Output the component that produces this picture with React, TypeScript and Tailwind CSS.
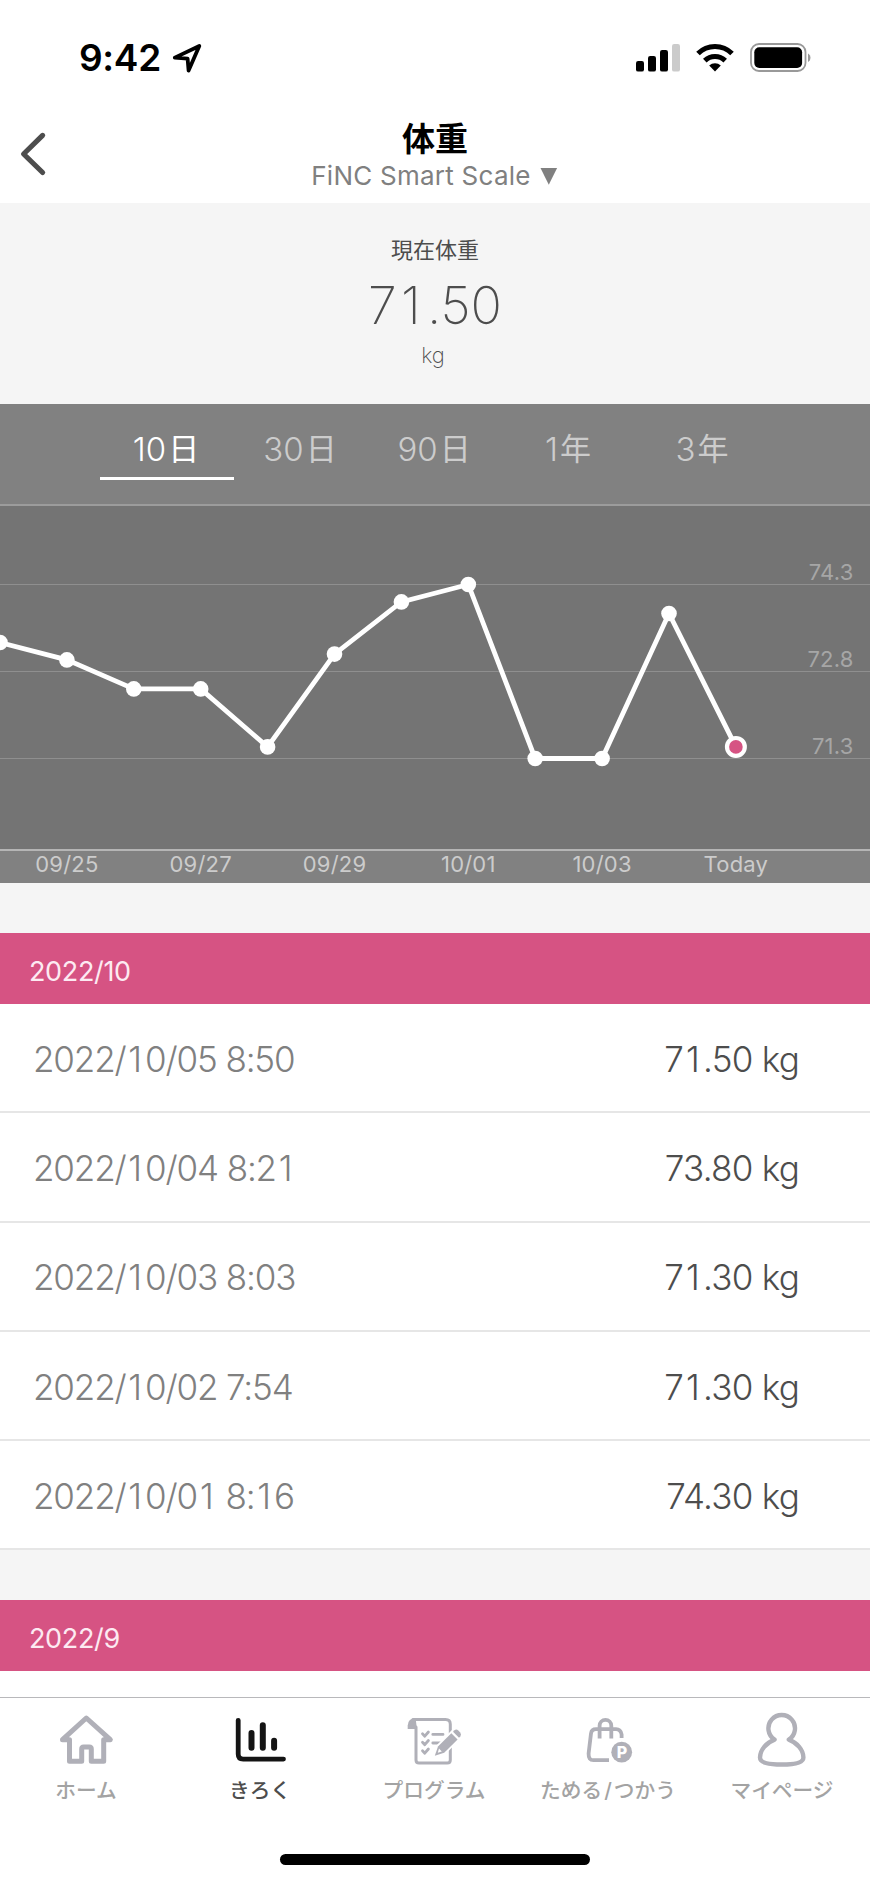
import type { ReactNode } from 'react'

type Entry = { date: string; value: string }

const RANGES = [
  { n: '10', unit: '日' },
  { n: '30', unit: '日' },
  { n: '90', unit: '日' },
  { n: '1', unit: '年' },
  { n: '3', unit: '年' },
]

const WEIGHTS = [73.3, 73.0, 72.5, 72.5, 71.5, 73.1, 74.0, 74.3, 71.3, 71.3, 73.8, 71.5]
const GRID = [74.3, 72.8, 71.3]
const DAYS = ['09/25', '09/27', '09/29', '10/01', '10/03', 'Today']

const ENTRIES: Entry[] = [
  { date: '2022/10/05 8:50', value: '71.50 kg' },
  { date: '2022/10/04 8:21', value: '73.80 kg' },
  { date: '2022/10/03 8:03', value: '71.30 kg' },
  { date: '2022/10/02 7:54', value: '71.30 kg' },
  { date: '2022/10/01 8:16', value: '74.30 kg' },
]

/** Pads the narrow "1" to the width of the other digits so the columns line up. */
function Num({ children }: { children: string }) {
  return children.split(/(1)/).map((part, i) =>
    part === '1' ? (
      <span key={i} className="pr-[0.12em] pl-[0.08em]">
        1
      </span>
    ) : (
      part
    ),
  )
}

function StatusBar() {
  return (
    <div className="flex h-[110px] items-start justify-between pt-[38px] pr-[58px] pl-[79px]">
      <div className="flex h-10 items-center">
        <span className="w-[93px] text-[37px] leading-10 font-semibold tracking-[-0.3px]">9:42</span>
        <svg width="31" height="31" viewBox="0 0 31 31" fill="none">
          <path
            d="M2.8 14.6 27.3 3 16.6 27.6 15.6 15.7Z"
            stroke="#000"
            strokeWidth="3.8"
            strokeLinejoin="round"
          />
        </svg>
      </div>
      <svg width="176" height="40" viewBox="636 38 176 40">
        <rect x="636" y="61" width="8" height="10.6" rx="2.2" />
        <rect x="648" y="56" width="8" height="15.6" rx="2.2" />
        <rect x="660" y="50" width="8" height="21.6" rx="2.2" />
        <rect x="672" y="44" width="8" height="27.6" rx="2.2" fill="#cbcbcb" />
        <g fill="none" stroke="#000" strokeWidth="5">
          <path d="M698 53.6a24 24 0 0 1 34 0" />
          <path d="M704.8 60.6a14.5 14.5 0 0 1 20.4 0" />
        </g>
        <path d="M715 71.6 709.2 65.4a8.6 8.6 0 0 1 11.6 0Z" />
        <rect x="751" y="44" width="54.5" height="27" rx="8" fill="none" stroke="#999" strokeWidth="1.8" />
        <rect x="754.3" y="47.3" width="47.8" height="20.6" rx="5" />
        <path d="M808 53.4a5 5 0 0 1 0 8.6Z" fill="#999" />
      </svg>
    </div>
  )
}

function Header() {
  return (
    <header className="relative flex h-[93px] flex-col items-center pt-[9px]">
      <svg className="absolute top-[20px] left-[16px]" width="34" height="48" viewBox="16 130 34 48" fill="none">
        <path
          d="M42.6 135.4 23.6 154l19 18.5"
          stroke="#4d4d4d"
          strokeWidth="5.2"
          strokeLinecap="round"
          strokeLinejoin="round"
        />
      </svg>
      <h1 className="text-[33px] leading-10 font-bold">体重</h1>
      <div className="flex items-center pt-[2px] pr-[1px] text-[#808080]">
        <span className="text-[26px] leading-[30px] tracking-[0.25px]">FiNC Smart Scale</span>
        <svg className="ml-[9px]" width="18" height="18" viewBox="0 0 18 18">
          <path d="M.5 1h16.6L8.8 17.8Z" fill="#808080" />
        </svg>
      </div>
    </header>
  )
}

function Current() {
  return (
    <section className="flex h-[201px] flex-col items-center bg-[#f5f5f5] text-[#4d4d4d]">
      <p className="pt-[32px] text-[22px] leading-[30px]">現在体重</p>
      <p className="pt-[11px] text-[52px] leading-[60px] font-extralight">
        <Num>71.50</Num>
      </p>
      <p className="pt-[4px] pr-[4px] text-[22px] leading-[30px] font-extralight">kg</p>
    </section>
  )
}

function RangeTabs() {
  return (
    <nav className="flex h-[102px] justify-center border-b-2 border-[#9c9c9c] bg-[#818181]">
      {RANGES.map(({ n, unit }, i) => (
        <div
          key={n}
          className={`flex h-[76px] w-[134px] items-center justify-center gap-[2px] border-b-3 pt-[16px] pr-[2px] leading-10 ${
            i === 0 ? 'border-white text-white' : 'border-transparent text-[#cccccc]'
          }`}
        >
          <span className="text-[33px] font-light">{n}</span>
          <span className="text-[31px] font-normal">{unit}</span>
        </div>
      ))}
    </nav>
  )
}

const STEP = 66.9
const px = (i: number) => i * STEP
const py = (kg: number) => 78.5 + (74.3 - kg) * 58

function Chart() {
  const last = WEIGHTS.length - 1
  return (
    <section>
      <svg className="block bg-[#747474]" width="870" height="343" viewBox="0 0 870 343">
        {GRID.map((g) => (
          <g key={g}>
            <line x1="0" x2="870" y1={py(g)} y2={py(g)} stroke="#8f8f8f" strokeWidth="1.2" />
            <text x="853.5" y={py(g) - 5} textAnchor="end" fontSize="22" letterSpacing="0.2" fill="#a6a6a6">
              {g.toFixed(1)}
            </text>
          </g>
        ))}
        <polyline
          points={WEIGHTS.map((w, i) => `${px(i)},${py(w)}`).join(' ')}
          fill="none"
          stroke="#fff"
          strokeWidth="4.8"
        />
        {WEIGHTS.map((w, i) => (
          <circle key={i} cx={px(i)} cy={py(w)} r={i === last ? 11 : 7.8} fill="#fff" />
        ))}
        <circle cx={px(last)} cy={py(WEIGHTS[last])} r="6.8" fill="#d65383" />
      </svg>
      <div className="flex h-[34px] border-t-2 border-[#b5b5b5] bg-[#818181]">
        {DAYS.map((d) => (
          <span
            key={d}
            className="w-[133.8px] text-center text-[22px] leading-[26px] tracking-[0.2px] text-[#cccccc]"
          >
            {d}
          </span>
        ))}
      </div>
    </section>
  )
}

function MonthBar({ children }: { children: ReactNode }) {
  return (
    <h2 className="mt-[50px] flex h-[71px] items-center bg-[#d65383] pt-[7px] pl-[29px] text-[27px] tracking-[-0.35px] text-[#fdeaf2]">
      {children}
    </h2>
  )
}

function Row({ date, value }: Entry) {
  return (
    <li className="flex h-[109.3px] items-center justify-between border-b-2 border-[#e6e6e6] bg-white pt-[3px] pr-[71px] pl-[33px] text-[35px] font-light">
      <span className="tracking-[-1.15px] text-[#808080]">
        <Num>{date}</Num>
      </span>
      <span className="tracking-[-0.75px] text-[#4d4d4d]">
        <Num>{value}</Num>
      </span>
    </li>
  )
}

function Tab({ label, active = false, children }: { label: ReactNode; active?: boolean; children: ReactNode }) {
  return (
    <div className={`flex w-[174px] flex-col items-center ${active ? 'text-[#141414]' : 'text-[#b0b0b8]'}`}>
      <svg
        width="60"
        height="60"
        viewBox="0 0 60 60"
        fill="none"
        stroke="currentColor"
        strokeLinecap="round"
        strokeLinejoin="round"
      >
        {children}
      </svg>
      <span
        className={`mt-[6px] pr-[2px] text-[20.7px] leading-[30px] font-medium ${active ? 'text-[#4d4d4d]' : 'text-[#a3a3a3]'}`}
      >
        {label}
      </span>
    </div>
  )
}

function TabBar() {
  return (
    <footer className="mt-[25.5px] h-[186px] border-t border-[#b8b8bb] bg-white">
      <div className="flex pt-[12px]">
        <Tab label="ホーム">
          <path d="M29.3 8 53.3 29.7H46.7V51.2H34.3V39Q34.3 37 32.3 37H26.7Q24.7 37 24.7 39V51.2H12.5V29.7H5.5Z" strokeWidth="5" />
        </Tab>
        <Tab label="きろく" active>
          <path d="M7.2 10.3V44Q7.2 49.1 12.2 49.1H52.5" strokeWidth="4.8" />
          <path d="M20.5 22.9V37.7M31.8 15.2V37.7M43.1 30.8V37.7" strokeWidth="6" />
        </Tab>
        <Tab label="プログラム">
          <path d="M8 9.4H40.5Q45.3 9.4 45.3 14.2V50Q45.3 53 42.3 53H14Q11 53 11 50V17" strokeWidth="3" />
          <path d="M2.7 19V15.5Q3.2 8 10.5 8L12 19Z" fill="currentColor" stroke="none" />
          <g strokeWidth="2.8">
            <path d="m17.5 23.8 2.3 2.4 3.6-4.2M17.5 32.3l2.3 2.4 3.6-4.2M17.5 40.8l2.3 2.4 3.6-4.2" />
            <path d="M27.8 24.4H38M27.8 33H35" />
          </g>
          <path d="M30.5 45.2 33.4 36.5 49.3 20.8Q51.3 18.8 53.3 20.8L55 22.5Q57 24.5 55 26.5L39.2 42.2Z" fill="#fff" stroke="#fff" strokeWidth="4.4" />
          <path d="M29.8 45.8 33 36.5 46.3 23.2 52.6 29.4 39.2 42.7Z" fill="currentColor" stroke="none" />
          <path d="M48 21.7 49.5 20.2Q51.5 18.9 53.3 20.5L55.2 22.4Q56.8 24.3 55.3 26.4L54 27.8Z" fill="currentColor" stroke="none" />
          <path d="M32.8 42.7 34 38.6 36.8 41.4Z" fill="#fff" stroke="none" />
        </Tab>
        <Tab
          label={
            <>
              ためる<span className="px-[2px]">/</span>つかう
            </>
          }
        >
          <path d="M42.6 28V24.5Q41.6 19.2 37 19.2H17Q12.6 19.2 12 23.5L9.6 43.6Q9.4 50.2 14.4 50.2H30" strokeWidth="3.8" strokeLinecap="butt" />
          <path d="M20.6 28.4V15.8A5.8 5.8 0 0 1 32.3 15.8V28.4" strokeWidth="3.8" strokeLinecap="butt" />
          <circle cx="42.7" cy="42.2" r="10.4" fill="currentColor" stroke="none" />
          <text x="42.9" y="48" textAnchor="middle" fontSize="16" fontWeight="800" fill="#fff" stroke="none">
            P
          </text>
        </Tab>
        <Tab label="マイページ">
          <path
            d="M21.6 29.6A13.3 13.3 0 1 1 35.8 29.6C44 32.5 50.4 40 50.4 47.4 50.4 52.5 42 54.5 28.7 54.5S7 52.5 7 47.4C7 40 13.4 32.5 21.6 29.6Z"
            strokeWidth="4.4"
          />
        </Tab>
      </div>
      <div className="mx-auto mt-[48px] h-[11px] w-[310px] rounded-full bg-black" />
    </footer>
  )
}

export default function App() {
  return (
    <div className="flex h-[1883px] w-[870px] flex-col overflow-hidden bg-white font-['Inter','Noto_Sans_CJK_JP',sans-serif] text-black">
      <StatusBar />
      <Header />
      <Current />
      <RangeTabs />
      <Chart />
      <main className="bg-[#f5f5f5]">
        <MonthBar>2022/10</MonthBar>
        <ul>
          {ENTRIES.map((e) => (
            <Row key={e.date} {...e} />
          ))}
        </ul>
        <MonthBar>2022/9</MonthBar>
      </main>
      <TabBar />
    </div>
  )
}
